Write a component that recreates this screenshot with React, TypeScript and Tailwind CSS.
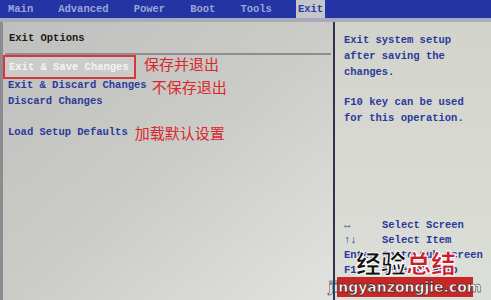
import React from 'react'

const TABS = ['Main', 'Advanced', 'Power', 'Boot', 'Tools']

const KEYS: [string, string][] = [
  ['↔', 'Select Screen'],
  ['↑↓', 'Select Item'],
  ['Enter', 'Go to Sub Screen'],
  ['F1', 'General Help'],
  ['ESC', 'Exit'],
]

const mono = "font-['Liberation_Mono','DejaVu_Sans_Mono',monospace]"
const cjk = "font-['Noto_Sans_CJK_SC','Noto_Sans_CJK_JP',sans-serif]"

export default function App() {
  return (
    <div className={`relative w-[491px] h-[300px] overflow-hidden bg-[#c9cac6] ${mono} text-[10.5px] font-bold leading-none`}>
      {/* Top menu bar */}
      <div className="flex h-[18px] items-center bg-[#2434a4] pl-[8px] text-[#9aa6d8]">
        <div className="flex gap-[25px]">
          {TABS.map((t) => (
            <span key={t}>{t}</span>
          ))}
        </div>
        <span className="ml-[24px] flex h-full items-center bg-[#c4c6cc] px-[2px] text-[#2a3aa0]">Exit</span>
        <div className="flex-1" />
      </div>
      <div className="h-[4px] bg-[#a8acba]" />

      <div className="flex h-[278px]">
        {/* Left panel */}
        <div className="relative w-[333px] border-l-[3px] border-[#8c8c90] bg-gradient-to-br from-[#bfbfbd] via-[#cbccc8] to-[#e2e3e0]">
          <div className="pl-[6px] pt-[11px] text-[#1a1a1a]">Exit Options</div>
          <div className="mx-[2px] mt-[9px] h-[2px] bg-[#8e8e90]" />
          <div className="flex items-start">
            <div className="flex h-[24px] w-[133px] items-end border-2 border-[#d8383c] bg-[#cbcbc8] pb-[4px] pl-[4px] text-[#f4f4f4]">
              Exit &amp; Save Changes
            </div>
            <span className={`ml-[8px] mt-[1px] text-[15px] font-normal leading-none text-[#d8282c] ${cjk}`}>保存并退出</span>
          </div>
          <div className="flex h-[14px] items-center pl-[5px] text-[#2a3a9c]">
            <span>Exit &amp; Discard Changes</span>
            <span className={`ml-[5px] mt-[2px] text-[15px] font-normal leading-none text-[#d8282c] ${cjk}`}>不保存退出</span>
          </div>
          <div className="pl-[5px] pt-[3px] text-[#2a3a9c]">Discard Changes</div>
          <div className="mt-[19px] flex items-center pl-[5px] text-[#2a3a9c]">
            <span>Load Setup Defaults</span>
            <span className={`ml-[7px] text-[15px] font-normal leading-none text-[#d8282c] ${cjk}`}>加载默认设置</span>
          </div>
        </div>

        <div className="w-[2px] bg-[#2e3450]" />

        {/* Right help panel */}
        <div className="flex flex-1 flex-col bg-gradient-to-b from-[#d2d4cc] to-[#dcded8] pl-[9px] text-[#2a3a9c]">
          <div className="flex flex-col gap-[5px] pt-[13px] leading-[11px]">
            <span>Exit system setup</span>
            <span>after saving the</span>
            <span>changes.</span>
          </div>
          <div className="mt-[19px] flex flex-col gap-[5px] leading-[11px]">
            <span>F10 key can be used</span>
            <span>for this operation.</span>
          </div>
          <div className="mt-[96px] flex flex-col gap-[4px] leading-[11px]">
            {KEYS.map(([k, d]) => (
              <div key={k} className="flex">
                <span className="w-[38px]">{k}</span>
                <span>{d}</span>
              </div>
            ))}
          </div>
        </div>
      </div>

      {/* Watermark */}
      <div className="absolute left-[356px] top-[250px] flex flex-col items-center">
        <div className={`${cjk} text-[25px] font-black leading-none [-webkit-text-stroke:1px_white]`}>
          <span className="text-[#111]">经验</span>
          <span className="text-[#c8202a]">总结</span>
        </div>
      </div>
      <div className="absolute left-[337px] top-[277px] flex h-[20px] w-[136px] items-center justify-center bg-[#c62828]">
        <span className="font-['DejaVu_Sans',sans-serif] text-[14px] font-bold text-white [-webkit-text-stroke:0.5px_black]">
          jingyanzongjie.com
        </span>
      </div>
    </div>
  )
}
